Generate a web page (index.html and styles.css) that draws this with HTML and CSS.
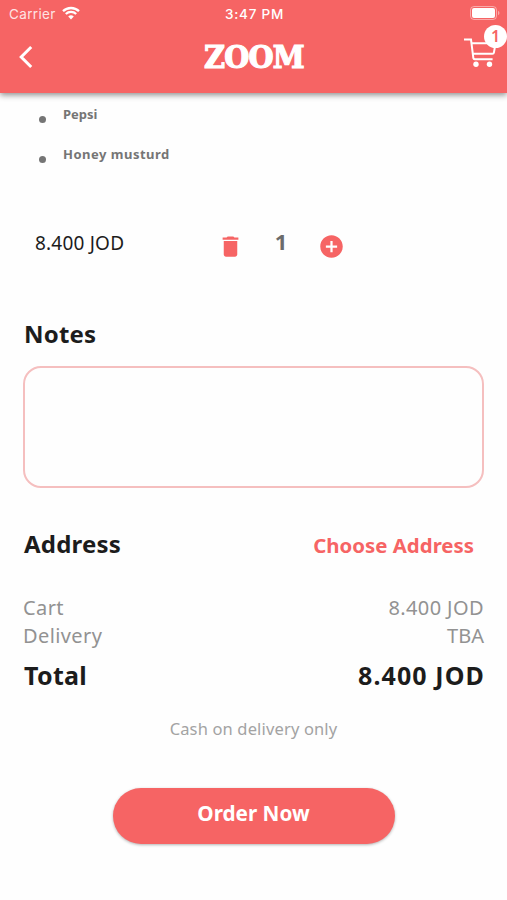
FILE: index.html
```html
<!DOCTYPE html>
<html lang="en">
  <head>
    <meta charset="UTF-8" />
    <meta name="viewport" content="width=device-width, initial-scale=1.0" />
    <title>Zoom - Cart</title>
    <link rel="stylesheet" href="styles.css">
  </head>
  <body>
    <header class="header">
      <div class="status-bar">
        <div class="carrier">
          <span>Carrier</span>
          <svg class="wifi" viewBox="0 0 18 14">
            <path d="M1 5.2a11.6 11.6 0 0 1 16 0" />
            <path d="M3.8 8a7.6 7.6 0 0 1 10.4 0" />
            <path class="wifi-dot" d="M6.2 10.5a4.1 4.1 0 0 1 5.6 0L9 13.4z" />
          </svg>
        </div>
        <span class="time">3:47 PM</span>
        <svg class="battery" viewBox="0 0 30 14">
          <rect class="battery-case" x="0.5" y="0.5" width="26" height="13" rx="3.5" />
          <rect x="2" y="2" width="23" height="10" rx="2" fill="#fff" />
          <path d="M28 4.8c2 .8 2 3.6 0 4.4z" fill="#fff" opacity="0.45" />
        </svg>
      </div>
      <div class="nav-bar">
        <svg class="back" viewBox="0 0 16 24">
          <path d="M13.2 2L3.2 12l10 10" />
        </svg>
        <h1 class="logo">ZOOM</h1>
        <div class="cart">
          <svg class="cart-icon" viewBox="0 0 36 32">
            <path d="M1 2.500h7l2.400 18.800q.2 1 1.200 1h18M8.500 6.200h24.100l-1.700 9.400q-.2 1.200-1.400 1.200H9.800" />
            <circle cx="13" cy="27.200" r="2.700" />
            <circle cx="26.500" cy="27.200" r="2.700" />
          </svg>
          <span class="badge">1</span>
        </div>
      </div>
    </header>

    <main class="content">
      <ul class="extras">
        <li>Pepsi</li>
        <li class="wide">Honey musturd</li>
      </ul>

      <div class="item-row">
        <span class="item-price">8.400 JOD</span>
        <svg class="icon" viewBox="0 0 24 24">
          <path d="M6 19c0 1.100.9 2 2 2h8c1.100 0 2-.9 2-2V7H6v12zM19 4h-3.500l-1-1h-5l-1 1H5v2h14V4z" />
        </svg>
        <span class="quantity">1</span>
        <svg class="icon" viewBox="0 0 24 24">
          <path d="M12 2C6.480 2 2 6.480 2 12s4.480 10 10 10 10-4.480 10-10S17.520 2 12 2zm5 11h-4v4h-2v-4H7v-2h4V7h2v4h4v2z" />
        </svg>
      </div>

      <h2 class="notes-title">Notes</h2>
      <textarea class="notes"></textarea>

      <div class="address-row">
        <h2>Address</h2>
        <a class="choose">Choose Address</a>
      </div>

      <div class="summary">
        <div class="row"><span>Cart</span><span>8.400 JOD</span></div>
        <div class="row"><span>Delivery</span><span class="tba">TBA</span></div>
        <div class="row total"><span>Total</span><span class="total-price">8.400 JOD</span></div>
      </div>

      <p class="payment">Cash on delivery only</p>
      <button class="order" type="button">Order Now</button>
    </main>
  </body>
</html>
```

FILE: styles.css
```css
* {
  box-sizing: border-box;
}

body {
  margin: 0;
  height: 900px;
  overflow: hidden;
  background-color: #fefefe;
  font-family: "Noto Sans", sans-serif;
  color: #1c1c1c;
}

h1,
h2,
p,
ul {
  margin: 0;
  padding: 0;
}

.header {
  height: 93px;
  background-color: #f66464;
  color: #fff;
  box-shadow: 0 2px 6px rgba(0, 0, 0, 0.45);
}

.status-bar {
  display: grid;
  grid-template-columns: 1fr auto 1fr;
  align-items: center;
  height: 27px;
  padding: 0 7px 0 9px;
  font-family: Inter, sans-serif;
  font-size: 13.5px;
}

.carrier {
  display: flex;
  align-items: center;
  gap: 6px;
  color: #fee3e3;
  letter-spacing: 0.35px;
}

.wifi {
  width: 18px;
  height: 14px;
  margin-top: -2px;
  fill: none;
  stroke: #fff;
  stroke-width: 2.3;
}

.wifi .wifi-dot {
  fill: #fff;
  stroke: none;
}

.time {
  font-weight: 500;
  letter-spacing: 0.75px;
}

.battery {
  width: 30px;
  height: 14px;
  margin-top: -1px;
  justify-self: end;
}

.battery-case {
  fill: none;
  stroke: #fff;
  opacity: 0.45;
}

.nav-bar {
  display: grid;
  grid-template-columns: 1fr auto 1fr;
  align-items: center;
  height: 60px;
  padding: 0 9px 0 18px;
}

.back {
  width: 16px;
  height: 24px;
  fill: none;
  stroke: #fff;
  stroke-width: 3;
}

.logo {
  font-family: "DejaVu Serif Condensed", "DejaVu Serif", serif;
  font-size: 32px;
  line-height: 40px;
  letter-spacing: -0.8px;
  transform: translate(-4px, 0);
  -webkit-text-stroke: 1.2px #fff;
}

.cart {
  position: relative;
  justify-self: end;
  width: 36px;
  height: 40px;
}

.cart-icon {
  width: 36px;
  height: 32px;
  margin-left: 1px;
  fill: none;
  stroke: #fff;
  stroke-width: 2;
}

.cart-icon circle {
  fill: #fff;
  stroke: none;
}

.badge {
  position: absolute;
  top: -12px;
  right: -9px;
  width: 23px;
  height: 23px;
  border-radius: 50%;
  background-color: #fff;
  color: #f66464;
  font-size: 16px;
  line-height: 22px;
  font-weight: 600;
  text-align: center;
}

.content {
  padding: 11px 23px 0;
}

.extras {
  list-style: none;
  color: #757575;
  font-size: 13px;
  font-weight: bold;
}

.extras li {
  display: flex;
  height: 20px;
  margin-bottom: 20px;
  padding-left: 16px;
  line-height: 20px;
}

.extras li::before {
  content: "";
  width: 7px;
  height: 7px;
  margin: 12px 17px 0 0;
  border-radius: 50%;
  background-color: #757575;
}

.extras .wide {
  letter-spacing: 0.5px;
}

.item-row {
  display: flex;
  align-items: center;
  height: 40px;
  margin-top: 59px;
  padding-left: 12px;
}

.item-price {
  width: 182px;
  font-size: 19px;
  letter-spacing: 0.2px;
}

.icon {
  width: 27px;
  height: 27px;
  margin-top: 6px;
  fill: #f66464;
}

.quantity {
  width: 74px;
  margin-top: -4px;
  color: #6b6b6b;
  font-size: 22px;
  font-weight: bold;
  text-align: center;
}

h2 {
  padding-left: 1px;
  font-size: 24px;
  line-height: 30px;
  font-weight: bold;
  letter-spacing: 0.2px;
}

.notes-title {
  margin-top: 56px;
}

.notes {
  display: block;
  width: 461px;
  height: 122px;
  margin-top: 17px;
  border: 2px solid #f5bfbf;
  border-radius: 18px;
  background: transparent;
  resize: none;
}

.address-row {
  display: flex;
  align-items: center;
  justify-content: space-between;
  height: 30px;
  margin-top: 41px;
  padding-right: 10px;
}

.choose {
  padding-top: 1px;
  color: #f66464;
  font-size: 20.4px;
  font-weight: bold;
}

.summary {
  margin-top: 35px;
}

.row {
  display: flex;
  justify-content: space-between;
  color: #929292;
  font-size: 20px;
  line-height: 28px;
  letter-spacing: 0.4px;
}

.row .tba {
  letter-spacing: 0;
}

.total {
  margin-top: 8px;
  padding-left: 1px;
  color: #1c1c1c;
  font-size: 25px;
  line-height: 34px;
  font-weight: bold;
  letter-spacing: 0.3px;
}

.total-price {
  margin-right: -1px;
  letter-spacing: 1.1px;
}

.payment {
  margin-top: 25px;
  color: #a3a3a3;
  font-size: 16.5px;
  line-height: 24px;
  letter-spacing: 0.15px;
  text-align: center;
}

.order {
  display: block;
  width: 282px;
  height: 56px;
  margin: 47px auto 0;
  padding: 0 0 7px;
  border: none;
  border-radius: 28px;
  background-color: #f66464;
  box-shadow: 0 1px 3px rgba(0, 0, 0, 0.3);
  color: #fff;
  font-family: inherit;
  font-size: 20.7px;
  font-weight: bold;
}
```
